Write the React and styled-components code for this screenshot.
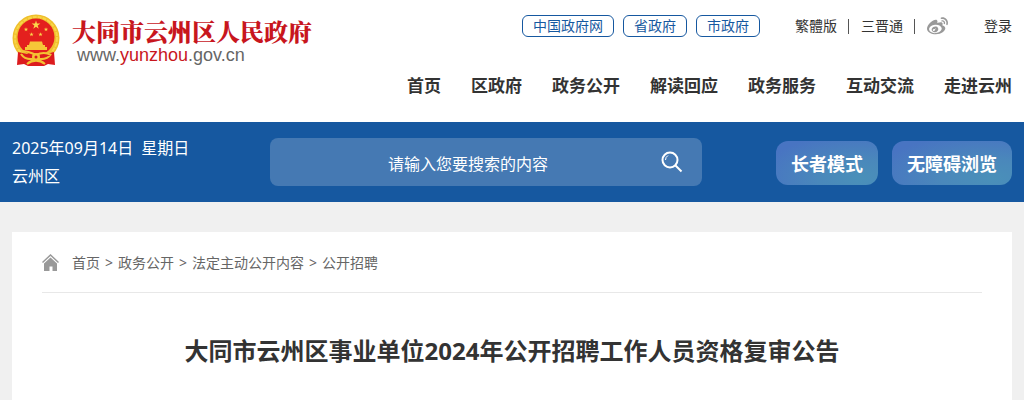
import React from 'react';
import styled, { createGlobalStyle } from 'styled-components';
import { FaWeibo } from 'react-icons/fa';

const GlobalStyle = createGlobalStyle`
  * {
    box-sizing: border-box;
  }
  body {
    margin: 0;
    background: #f0f0f0;
    color: #333;
    font-family: "Noto Sans", "Noto Sans CJK SC", sans-serif;
    font-size: 14px;
  }
  a {
    color: inherit;
    text-decoration: none;
  }
`

const Page = styled.div`
  min-height: 100vh;
  display: flex;
  flex-direction: column;
`

const Header = styled.header`
  display: flex;
  justify-content: space-between;
  align-items: flex-start;
  padding: 14px 12px 22px;
  background: #fff;
`

const Logo = styled.a`
  display: flex;
  gap: 12px;
`

const LogoText = styled.div`
  padding-top: 4px;
`

const SiteName = styled.div`
  font-family: "Noto Serif CJK SC", "Noto Sans CJK SC", serif;
  font-size: 24px;
  font-weight: 900;
  line-height: 26px;
  color: #c8161d;
`

const SiteUrl = styled.div`
  padding-left: 5px;
  font-family: "Liberation Sans", Arial, sans-serif;
  font-size: 18px;
  line-height: 22px;
  color: #666;

  span {
    color: #c8161d;
  }
`

const HeaderRight = styled.div`
  display: flex;
  flex-direction: column;
  align-items: flex-end;
  gap: 34px;
`

const TopLinks = styled.div`
  display: flex;
  align-items: center;
  height: 24px;
  line-height: 20px;
`

const PillList = styled.div`
  display: flex;
  gap: 9px;
  margin-right: 35px;
`

const Pill = styled.a`
  padding: 0 10px;
  border: 1px solid #1658a0;
  border-radius: 6px;
  color: #1658a0;
`

const Divider = styled.span`
  width: 1px;
  height: 15px;
  margin: 0 12px 0 11px;
  background: #555;
`

const WeiboLink = styled.a`
  display: flex;
  margin-right: 36px;
  color: #999;
`

const Nav = styled.nav`
  display: flex;
  gap: 30px;
  font-size: 17px;
  font-weight: bold;
  line-height: 28px;
`

const Band = styled.div`
  display: flex;
  align-items: center;
  height: 80px;
  padding: 0 12px;
  background: #1658a0;
  color: #fff;
`

const DateInfo = styled.div`
  flex: 0 0 258px;
  font-size: 16px;
  line-height: 28px;
`

const DateLine = styled.div`
  display: flex;
  gap: 8px;
`

const Search = styled.form`
  flex: 1;
  display: flex;
  align-items: center;
  height: 48px;
  margin-right: 74px;
  padding-right: 19px;
  border-radius: 8px;
  background: #4579b3;
`

const SearchInput = styled.input`
  flex: 1;
  min-width: 0;
  height: 48px;
  padding: 3px 0 0 5px;
  border: 0;
  outline: none;
  background: transparent;
  color: #fff;
  font-family: inherit;
  font-size: 16px;
  text-align: center;

  &::placeholder {
    color: #fff;
    opacity: 1;
  }
`

const SearchButton = styled.button`
  display: flex;
  padding: 0;
  border: 0;
  background: none;
  color: #fff;
  cursor: pointer;
`

const Modes = styled.div`
  display: flex;
  gap: 14px;
  padding-top: 2px;
`

const ModeButton = styled.button`
  height: 44px;
  padding: 0 15px;
  border: 0;
  border-radius: 12px;
  background: radial-gradient(ellipse at 82% 85%, #4a90b9 0%, #4a88bb 35%, #4874c2 85%);
  color: #fff;
  font-family: inherit;
  font-size: 18px;
  font-weight: bold;
  cursor: pointer;
`

const Card = styled.main`
  flex: 1;
  margin: 30px 12px 0;
  padding: 0 30px;
  background: #fff;
`

const Breadcrumb = styled.nav`
  display: flex;
  align-items: center;
  height: 61px;
  border-bottom: 1px solid #e8e8e8;
  color: #666;

  svg {
    margin-right: 13px;
  }
`

const Crumbs = styled.div`
  display: flex;
  padding-top: 2px;
  line-height: 20px;
`

const Separator = styled.span`
  width: 18px;
  text-align: center;
`

const Title = styled.h1`
  margin: 40px 0;
  font-size: 24px;
  line-height: 36px;
  text-align: center;
`

const STAR = '0,-1 0.22,-0.31 0.95,-0.31 0.36,0.12 0.59,0.81 0,0.38 -0.59,0.81 -0.36,0.12 -0.95,-0.31 -0.22,-0.31'

const Star = ({ x, y, size }) => (
  <polygon points={STAR} transform={`translate(${x} ${y}) scale(${size})`} fill="#fbd84a" />
)

const Emblem = () => (
  <svg width="48" height="52" viewBox="0 0 48 52" aria-hidden="true">
    <circle cx="24" cy="24" r="23.5" fill="#efbf2c" />
    <circle cx="24" cy="24" r="21" fill="none" stroke="#f8d548" strokeWidth="2" strokeDasharray="4 1" />
    <circle cx="24" cy="23" r="18.5" fill="#e4201e" />
    <Star x={24} y={11} size={4.6} />
    <Star x={14} y={15.5} size={2.3} />
    <Star x={34} y={15.5} size={2.3} />
    <Star x={19.5} y={20.5} size={2.3} />
    <Star x={28.5} y={20.5} size={2.3} />
    <path d="M18 27.500h12l1 3.500h-14zM15 31h18v2h2v3H13v-3h2z" fill="#f6c638" />
    <path d="M6 38l9 2 9-2 9 2 9-2 1 13-7-1-4 2H16l-4-2-7 1z" fill="#dc1b1e" />
    <path d="M9 37q7 0 15 4 8-4 15 0M9 40q4 6 12 5M39 40q-4 6-12 5M15 50q9-7 18 0" fill="none" stroke="#f4c233" strokeWidth="2.2" />
    <circle cx="24" cy="43" r="4" fill="#f4c233" />
    <circle cx="24" cy="43" r="1.5" fill="#dc1b1e" />
  </svg>
)

const SearchIcon = () => (
  <svg width="22" height="22" viewBox="0 0 22 22" fill="none" stroke="currentColor" aria-hidden="true">
    <circle cx="9" cy="9" r="7.5" strokeWidth="2" />
    <path d="M14.5 14.5l6 6" strokeWidth="2" />
    <path d="M4.5 9q0-3 2.5-4.5" strokeWidth="1" />
  </svg>
)

const HomeIcon = () => (
  <svg width="17" height="17" viewBox="0 0 17 17" aria-hidden="true">
    <path d="M0.5 8.5L8.5 1l8 7.5" fill="none" stroke="#999" strokeWidth="1.5" />
    <path d="M2 9.5l6.5-6 6.5 6V17h-4.5v-4.5h-3V17H2z" fill="#999" />
  </svg>
)

const navItems = ['首页', '区政府', '政务公开', '解读回应', '政务服务', '互动交流', '走进云州']
const pills = ['中国政府网', '省政府', '市政府']
const crumbs = ['首页', '政务公开', '法定主动公开内容', '公开招聘']

export default function App() {
  return (
    <Page>
      <GlobalStyle />
      <Header>
        <Logo href="#">
          <Emblem />
          <LogoText>
            <SiteName>大同市云州区人民政府</SiteName>
            <SiteUrl>www.<span>yunzhou</span>.gov.cn</SiteUrl>
          </LogoText>
        </Logo>
        <HeaderRight>
          <TopLinks>
            <PillList>
              {pills.map(text => <Pill key={text} href="#">{text}</Pill>)}
            </PillList>
            <a href="#">繁體版</a>
            <Divider />
            <a href="#">三晋通</a>
            <Divider />
            <WeiboLink href="#" aria-label="微博"><FaWeibo size={21} /></WeiboLink>
            <a href="#">登录</a>
          </TopLinks>
          <Nav>
            {navItems.map(text => <a key={text} href="#">{text}</a>)}
          </Nav>
        </HeaderRight>
      </Header>
      <Band>
        <DateInfo>
          <DateLine>
            <span>2025年09月14日</span>
            <span>星期日</span>
          </DateLine>
          <div>云州区</div>
        </DateInfo>
        <Search onSubmit={e => e.preventDefault()}>
          <SearchInput type="text" placeholder="请输入您要搜索的内容" aria-label="请输入您要搜索的内容" />
          <SearchButton type="submit" aria-label="搜索"><SearchIcon /></SearchButton>
        </Search>
        <Modes>
          <ModeButton type="button">长者模式</ModeButton>
          <ModeButton type="button">无障碍浏览</ModeButton>
        </Modes>
      </Band>
      <Card>
        <Breadcrumb>
          <HomeIcon />
          <Crumbs>
            {crumbs.map((text, i) => (
              <React.Fragment key={text}>
                {i > 0 && <Separator>&gt;</Separator>}
                <a href="#">{text}</a>
              </React.Fragment>
            ))}
          </Crumbs>
        </Breadcrumb>
        <Title>大同市云州区事业单位2024年公开招聘工作人员资格复审公告</Title>
      </Card>
    </Page>
  )
}
